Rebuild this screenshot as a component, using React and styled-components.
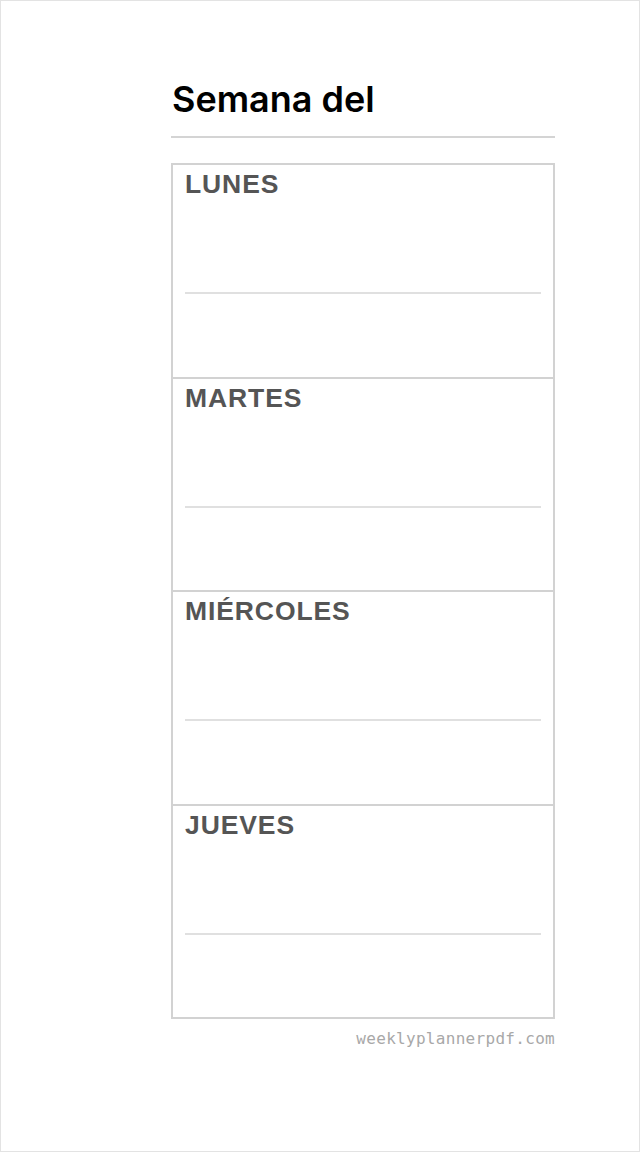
import React from 'react';
import styled, { createGlobalStyle } from 'styled-components';

const Global = createGlobalStyle`
  html, body { margin: 0; padding: 0; background: #fff; }
  * { box-sizing: border-box; }
`;

const Page = styled.div`
  width: 640px;
  height: 1152px;
  border: 1px solid #e3e3e3;
  padding: 78px 0 0 170px;
`;

const Column = styled.div`
  width: 384px;
  display: flex;
  flex-direction: column;
`;

const Title = styled.h1`
  margin: 0 0 0 1px;
  font-family: Inter, 'Liberation Sans', sans-serif;
  font-weight: 600;
  font-size: 36px;
  line-height: 40px;
  color: #000;
  letter-spacing: 0;
`;

const Rule = styled.div`
  height: 2px;
  background: #d4d4d4;
  margin: 17px 0 25px 0;
`;

const Grid = styled.div`
  border: 2px solid #d2d2d2;
  border-bottom: none;
  height: 856px;
  display: grid;
  grid-template-rows: repeat(4, 1fr);
`;

const Day = styled.div`
  border-bottom: 2px solid #d2d2d2;
  padding: 5px 12px 0 12px;
  display: flex;
  flex-direction: column;
`;

const DayName = styled.div`
  font-family: 'Liberation Sans', Arial, sans-serif;
  font-weight: 700;
  font-size: 26.5px;
  line-height: 28px;
  letter-spacing: 0.9px;
  color: #555;
`;

const Line = styled.div`
  height: 2px;
  background: #e0e0e0;
  margin-top: 94px;
`;

const Footer = styled.div`
  align-self: flex-end;
  margin: 10px 0 0 0;
  font-family: 'DejaVu Sans Mono', monospace;
  font-size: 16px;
  letter-spacing: 0.3px;
  color: #a8a8a8;
  line-height: 20px;
`;

const days = ['LUNES', 'MARTES', 'MIÉRCOLES', 'JUEVES'];

export default function App() {
  return (
    <>
      <Global />
      <Page>
        <Column>
          <Title>Semana del</Title>
          <Rule />
          <Grid>
            {days.map((d) => (
              <Day key={d}>
                <DayName>{d}</DayName>
                <Line />
              </Day>
            ))}
          </Grid>
          <Footer>weeklyplannerpdf.com</Footer>
        </Column>
      </Page>
    </>
  );
}
